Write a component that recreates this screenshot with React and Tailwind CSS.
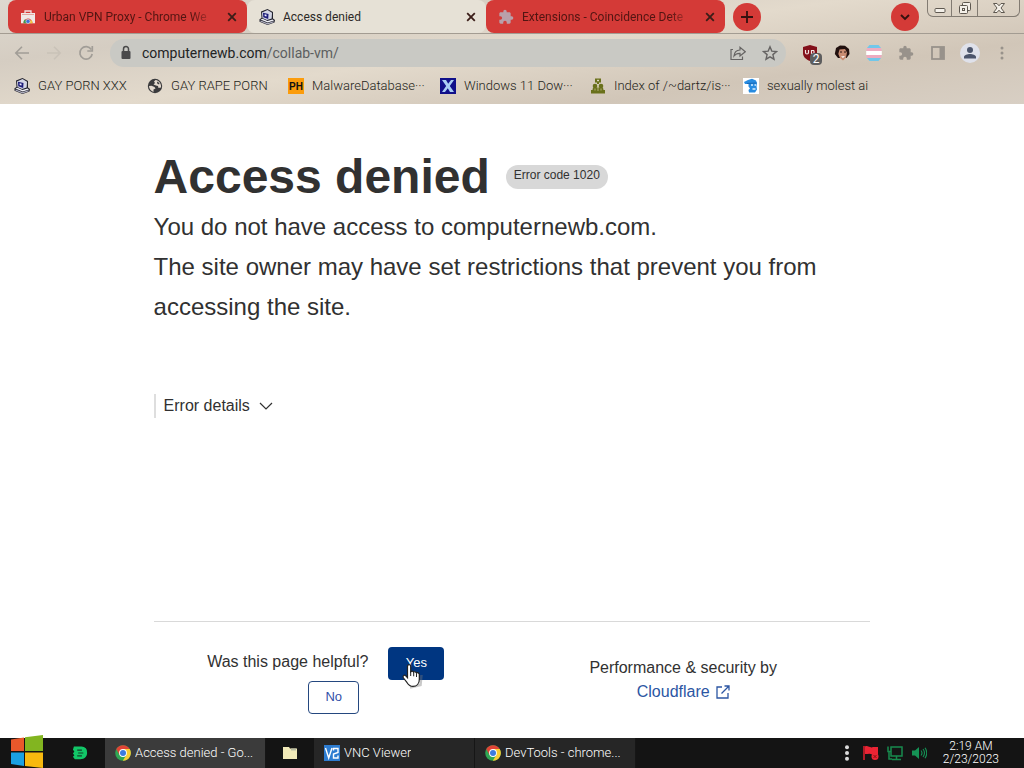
import React from "react";

function CollabIcon() {
  return (
    <svg viewBox="0 0 16 16" className="h-4 w-4 shrink-0" aria-hidden="true">
      <path d="M2 2.5 8.5 0 14 3 14 9.5 16 11 15.5 13.5 8.5 16 .5 12.8 .5 10.300 2.500 9Z" fill="#23232e" />
      <path d="M3 3.500 8.500 1 13 3.700 12.700 9.500 8 11 3.500 9Z" fill="#d4d6e6" />
      <path d="M4 3.800 9.500 5 9.200 10 4.300 8.300Z" fill="#1d1d7a" />
      <path d="M5.600 5.200 7.600 5.700 7.500 7.600 5.600 7.100Z" fill="#eef" />
      <path d="M1.500 10.600 3.500 9.800 8.500 12 13.500 10.500 15 11.400 8.700 13.600Z" fill="#f0f0f6" />
      <path d="M1.500 12 8.600 14.800 14.600 12.700" fill="none" stroke="#b4b4c4" strokeWidth="1.200" />
    </svg>
  );
}

function StoreIcon() {
  return (
    <svg viewBox="0 0 16 16" className="h-4 w-4 shrink-0" aria-hidden="true">
      <path d="M5 4.500V2h6v2.500" fill="none" stroke="#f2dede" strokeWidth="1.300" />
      <path d="M1 4h14v10.300H1z" fill="#efe9e7" />
      <path d="M2 5.500h12" stroke="#e3a49e" />
      <path d="M3.500 14.300a4.500 4.500 0 0 1 9-.5v.5Z" fill="#e0453a" />
      <path d="M3.500 14.300a4.500 4.500 0 0 1 1.500-4l2.500 4Z" fill="#3b9a55" />
      <path d="M12.500 14.300a4.500 4.500 0 0 0-1.300-3.500l-2.700 3.500Z" fill="#f2c43a" />
      <circle cx="8" cy="12.400" r="2.100" fill="#3f6fd8" stroke="#fff" strokeWidth=".5" />
    </svg>
  );
}

function PuzzleIcon({ className }) {
  return (
    <svg viewBox="0 0 24 24" className={className} fill="currentColor" aria-hidden="true">
      <path d="M20.5 11H19V7c0-1.100-.9-2-2-2h-4V3.500a2.500 2.500 0 0 0-5 0V5H4c-1.100 0-2 .9-2 2v3.800h1.500a2.700 2.700 0 0 1 0 5.400H2V20c0 1.100.9 2 2 2h3.800v-1.500a2.700 2.700 0 0 1 5.400 0V22H17c1.100 0 2-.9 2-2v-4h1.500a2.500 2.500 0 0 0 0-5z" />
    </svg>
  );
}

function CrossIcon() {
  return (
    <svg viewBox="0 0 10 10" className="h-[10px] w-[10px]" aria-hidden="true">
      <path d="M1.200 1.200 8.800 8.800M8.800 1.200 1.200 8.800" stroke="currentColor" strokeWidth="1.800" />
    </svg>
  );
}

function GlobeIcon() {
  return (
    <svg viewBox="0 0 16 16" className="h-4 w-4 shrink-0" aria-hidden="true">
      <circle cx="8" cy="8" r="7.200" fill="#3b3b3d" />
      <path d="M2 8 4.500 7.800 7.500 9 8.500 10.500 6.500 11.500 6.500 14 C4 13 2 11 2 8Z" fill="#e2d9ce" />
      <path d="M8.500 2 7 3.500 8 5 6.500 6.500 9 7.500 11 8 11.500 10 14 9.500 C14.600 6.500 12.500 2.500 8.500 2Z" fill="#e2d9ce" />
      <path d="M10 3.500 12.500 5 12 6.500 10.200 5.500Z" fill="#3b3b3d" />
    </svg>
  );
}

function PhIcon() {
  return (
    <svg viewBox="0 0 16 16" className="h-4 w-4 shrink-0" aria-hidden="true">
      <rect width="16" height="16" fill="#fb9c0c" />
      <text x="8" y="12" textAnchor="middle" fontFamily="Liberation Sans, sans-serif" fontWeight="700" fontSize="10" fill="#111">PH</text>
    </svg>
  );
}

function XIcon() {
  return (
    <svg viewBox="0 0 16 16" className="h-4 w-4 shrink-0" aria-hidden="true">
      <rect width="16" height="16" fill="#10108a" />
      <path d="M2 2h4l2.200 3.800L11 2h3l-4.200 6L14 14h-4l-2.200-3.800L5 14H2l4.200-6Z" fill="#a9cdf4" />
    </svg>
  );
}

function IndexIcon() {
  return (
    <svg viewBox="0 0 16 16" className="h-4 w-4 shrink-0" aria-hidden="true" fill="#6a711b">
      <path d="M5 .5h6v4H9v1.500H7V4.500H5Z" />
      <rect x="7" y="1.800" width="2" height="1.400" fill="#ded5c4" />
      <circle cx="5" cy="8" r="2.300" />
      <circle cx="11" cy="8" r="2.300" />
      <path d="M3 9.500h10l.5 2.500H15v3.500H1V12h1.500Z" />
      <path d="M8 7v6M5 10.500v2M11 10.500v2" stroke="#c5c08c" strokeWidth=".8" />
    </svg>
  );
}

function FigureIcon() {
  return (
    <svg viewBox="0 0 16 16" className="h-4 w-4 shrink-0" aria-hidden="true">
      <rect width="16" height="16" fill="#fff" />
      <path d="M1 4 5 2 9 .8 13 2.500 14 5 13.500 8 14 11.500 12 14.500H6L5.500 12 7 10.500 5.500 8.500V6L2 6Z" fill="#278be0" />
      <path d="M8 7h2M11.500 7h1.500M9.500 11h3" stroke="#d8efff" strokeWidth="1.300" />
      <path d="M4 5.500 13.500 5" stroke="#1767b4" strokeWidth="1" />
    </svg>
  );
}

function ChromeIcon() {
  return (
    <svg viewBox="0 0 16 16" className="h-4 w-4 shrink-0" aria-hidden="true">
      <circle cx="8" cy="8" r="7.800" fill="#2fa653" />
      <path d="M1.250 4.100A7.800 7.800 0 0 1 14.750 4.100L8 4.300 4.600 9.900Z" fill="#e04335" />
      <path d="M14.750 4.100A7.800 7.800 0 0 1 7.800 15.800L11.300 9.900 8 4.100Z" fill="#f9cc34" />
      <circle cx="8" cy="8" r="3.900" fill="#fff" />
      <circle cx="8" cy="8" r="3" fill="#3c7be0" />
    </svg>
  );
}

function Tab({ icon, title, active }) {
  return (
    <div
      className={
        "flex min-w-0 max-w-[239px] flex-1 items-center gap-2 rounded-lg pl-3 pr-[10px] " +
        (active ? "bg-[#e6e1d6] text-[#2c2926]" : "bg-[#d43a37] text-[#521512]")
      }
    >
      {icon}
      <span className={"min-w-0 flex-1 whitespace-nowrap text-xs leading-5 " + (active ? "" : "[mask-image:linear-gradient(to_right,black_86%,transparent)]")}>
        {title}
      </span>
      <button aria-label="Close tab" className="ml-1 text-[#3a1d18]">
        <CrossIcon />
      </button>
    </div>
  );
}

function Toolbar() {
  return (
    <div className="flex h-[37px] items-center pl-[14px] pr-[14px] text-[#666463]">
      <button aria-label="Back" className="mr-4 text-[#a19d97]">
        <svg viewBox="0 0 16 16" className="h-4 w-4" fill="none" stroke="currentColor" strokeWidth="1.600"><path d="M15 8H2M8 1.800 1.800 8 8 14.200" /></svg>
      </button>
      <button aria-label="Forward" className="mr-4 text-[#c9c2b8]">
        <svg viewBox="0 0 16 16" className="h-4 w-4" fill="none" stroke="currentColor" strokeWidth="1.600"><path d="M1 8h13M8 1.800 14.200 8 8 14.200" /></svg>
      </button>
      <button aria-label="Reload" className="mr-4 text-[#a19d97]">
        <svg viewBox="0 0 16 16" className="h-4 w-4" fill="none" stroke="currentColor" strokeWidth="1.700"><path d="M13.300 4.500A6.200 6.200 0 1 0 14.200 9" /><path d="M14.300 1v5H9.300" /></svg>
      </button>
      <div className="flex h-7 min-w-0 flex-1 items-center rounded-full bg-[#c9c9c4] pl-2 pr-2">
        <svg viewBox="0 0 16 16" className="mr-2 h-4 w-4 shrink-0" aria-hidden="true">
          <rect x="3.500" y="6" width="9" height="8" rx="1" fill="#49494a" />
          <path d="M5.500 6V4a2.500 2.500 0 0 1 5 0v2" fill="none" stroke="#49494a" strokeWidth="1.500" />
        </svg>
        <div className="relative min-w-0 flex-1 text-sm leading-5">
          <span className="text-[#232425]" aria-hidden="true">computernewb.com</span>
          <span className="text-[#5c5e60]" aria-hidden="true">/collab-vm/</span>
          <input aria-label="Address" defaultValue="computernewb.com/collab-vm/" className="absolute inset-0 w-full bg-transparent text-transparent outline-none" />
        </div>
        <button aria-label="Share" className="mr-4">
          <svg viewBox="0 0 16 16" className="h-4 w-4" fill="none" stroke="currentColor" strokeWidth="1.200"><path d="M3 4.500H1V14.500H12.500V11.500" /><path d="M4 11C4.300 7.300 6.500 5.200 10 5V2.200L15.300 6.700 10 11V8.300C7.300 8.200 5.500 9 4 11Z" /></svg>
        </button>
        <button aria-label="Bookmark this page">
          <svg viewBox="0 0 16 16" className="h-4 w-4" fill="none" stroke="currentColor" strokeWidth="1.400"><path d="m8 1.800 1.800 4.300 4.700.4-3.600 3.100 1.100 4.600L8 11.800l-4 2.400 1.100-4.600L1.500 6.500l4.700-.4Z" /></svg>
        </button>
      </div>
      <div className="ml-4 flex items-center gap-4">
        <button aria-label="Ad blocker" className="relative h-4 w-4">
          <svg viewBox="0 0 16 16" className="h-4 w-4" aria-hidden="true">
            <path d="M8 0 15 2v6c0 4-3 6.500-7 8-4-1.500-7-4-7-8V2Z" fill="#83101a" />
            <path d="M3.500 5v2.500a1.500 1.500 0 0 0 3 0V5M12 5.500H9.500v3h2.500V5.500" fill="none" stroke="#f5e4e4" strokeWidth="1.200" />
          </svg>
          <span className="absolute left-2 top-2 h-3 w-3 rounded-sm bg-[#5d5d5e] text-center text-xs leading-3 text-white">2</span>
        </button>
        <button aria-label="Portrait extension">
          <svg viewBox="0 0 16 16" className="h-4 w-4" aria-hidden="true">
            <path d="M2 3 6 .5 11 .8 15 4l.5 5-3 4H4L.8 9Z" fill="#21100e" />
            <path d="M5.500 4.500 11 4l2 3.500-1 5L9 15.500 6 13 4.300 9Z" fill="#c98c72" />
            <path d="M7 11.500 11 11 9 13Z" fill="#fff" /><path d="M6 7h2M10 7h2" stroke="#2b1612" />
          </svg>
        </button>
        <button aria-label="Flag extension">
          <svg viewBox="0 0 16 16" className="h-4 w-4" aria-hidden="true">
            <path d="M3.500 0h9L15 3H1Z" fill="#71c7ea" /><path d="M1 3h14l.8 3H.2Z" fill="#edabc0" /><path d="M.2 6h15.600v4H.2Z" fill="#fff" /><path d="M.2 10h15.600l-.8 3H1Z" fill="#edabc0" /><path d="M1 13h14l-2.500 3h-9Z" fill="#71c7ea" />
          </svg>
        </button>
        <button aria-label="Extensions" className="text-[#98928b]"><PuzzleIcon className="h-4 w-4" /></button>
        <button aria-label="Side panel" className="text-[#98928b]">
          <svg viewBox="0 0 16 16" className="h-4 w-4" aria-hidden="true"><rect x="2" y="2" width="12" height="12" fill="none" stroke="currentColor" strokeWidth="1.800" /><path d="M9.500 2H14v12H9.500Z" fill="currentColor" /></svg>
        </button>
        <button aria-label="Profile" className="-mx-[2px] flex h-5 w-5 items-center justify-center rounded-full bg-[#dfe1ea]">
          <svg viewBox="0 0 16 16" className="h-4 w-4" fill="#4c556c" aria-hidden="true"><circle cx="8" cy="5" r="3" /><path d="M2 13.500V12c0-2 3.500-3 6-3s6 1 6 3v1.500Z" /></svg>
        </button>
        <button aria-label="Menu" className="text-[#98928b]">
          <svg viewBox="0 0 16 16" className="h-4 w-4" fill="currentColor" aria-hidden="true"><circle cx="8" cy="3" r="1.500" /><circle cx="8" cy="8" r="1.500" /><circle cx="8" cy="13" r="1.500" /></svg>
        </button>
      </div>
    </div>
  );
}

function Bookmark({ icon, width, children }) {
  return (
    <a href="#bookmark" className={"flex shrink-0 items-center gap-2 whitespace-nowrap " + width}>
      {icon}
      {children}
    </a>
  );
}

function BrowserHeader() {
  return (
    <header className="shrink-0 bg-[#d9d0c3] bg-[linear-gradient(172deg,#ded9d0_0%,#d5cdc2_25%,#e3dacc_48%,#d1c6b8_75%,#d8cfc4_100%)] font-['Roboto','Noto_Sans',sans-serif]">
      <div className="flex h-[34px] items-stretch border-b border-[#a39c92] pl-2">
        <div className="flex min-w-0 flex-1">
          <Tab icon={<StoreIcon />} title="Urban VPN Proxy - Chrome We" />
          <Tab icon={<CollabIcon />} title="Access denied" active />
          <Tab icon={<PuzzleIcon className="h-4 w-4 shrink-0 text-[#b9a0aa]" />} title="Extensions - Coincidence Dete" />
          <button aria-label="New tab" className="ml-2 flex h-7 w-7 shrink-0 items-center justify-center self-center rounded-full bg-[#d43a37] text-[#35110f]">
            <svg viewBox="0 0 14 14" className="h-[14px] w-[14px]" stroke="currentColor" strokeWidth="1.800"><path d="M7 1v12M1 7h12" /></svg>
          </button>
        </div>
        <button aria-label="Search tabs" className="mr-2 flex h-7 w-7 shrink-0 items-center justify-center self-center rounded-full bg-[#d43a37] text-[#35110f]">
          <svg viewBox="0 0 12 12" className="h-3 w-3" fill="none" stroke="currentColor" strokeWidth="1.900"><path d="m2 4 4 4 4-4" /></svg>
        </button>
        <div className="mr-1 flex h-[17px] overflow-hidden rounded-b-md border border-t-0 border-[#827b72] text-[#5e5850]">
          <button aria-label="Minimize" className="flex w-6 items-center justify-center border-r border-[#827b72]">
            <svg viewBox="0 0 12 12" className="h-3 w-3"><rect x="1" y="6.500" width="10" height="4" rx="1" fill="#f4f0e9" stroke="currentColor" /></svg>
          </button>
          <button aria-label="Restore" className="flex w-[26px] items-center justify-center border-r border-[#827b72]">
            <svg viewBox="0 0 14 14" className="h-[14px] w-[14px]" fill="#f4f0e9" stroke="currentColor"><rect x="4.500" y="1.500" width="8" height="8" rx="1" /><rect x="1.500" y="4.500" width="8" height="8" rx="1" /><rect x="4.500" y="7.500" width="2" height="2" /></svg>
          </button>
          <button aria-label="Close window" className="flex w-[41px] items-center justify-center">
            <svg viewBox="0 0 14 12" className="h-3 w-[14px]" fill="#f4f0e9" stroke="currentColor"><path d="M1.500 1.500h3.500l2 2.300 2-2.300h3.500L9 6l3.500 4.500H9L7 8.200 5 10.500H1.500L5 6Z" /></svg>
          </button>
        </div>
      </div>
      <Toolbar />
      <nav aria-label="Bookmarks" className="flex h-[33px] items-center overflow-hidden pb-1 pl-[14px] text-[13px] font-light leading-5 text-[#241e19]">
        <Bookmark width="w-[133px]" icon={<CollabIcon />}>GAY PORN XXX</Bookmark>
        <Bookmark width="w-[141px]" icon={<GlobeIcon />}>GAY RAPE PORN</Bookmark>
        <Bookmark width="w-[152px]" icon={<PhIcon />}>MalwareDatabase···</Bookmark>
        <Bookmark width="w-[150px]" icon={<XIcon />}>Windows 11 Dow···</Bookmark>
        <Bookmark width="w-[153px]" icon={<IndexIcon />}>Index of /~dartz/is···</Bookmark>
        <Bookmark width="w-auto" icon={<FigureIcon />}>sexually molest ai</Bookmark>
      </nav>
    </header>
  );
}

function ErrorPage() {
  return (
    <main className="flex flex-1 flex-col bg-white font-['Liberation_Sans',Arial,sans-serif] text-[#313131]">
      <div className="mx-auto flex w-[70%] flex-1 flex-col pt-[49px]">
        <div className="flex items-center gap-4">
          <h1 className="text-5xl font-bold leading-[48px]">Access denied</h1>
          <span className="h-6 rounded-full bg-[#d8d8d8] px-2 text-xs leading-5">Error code 1020</span>
        </div>
        <p className="mt-[6px] text-2xl leading-10">
          You do not have access to computernewb.com.
          <br />
          The site owner may have set restrictions that prevent you from accessing the site.
        </p>
        <button className="mt-[67px] flex h-6 items-center gap-2 self-start border-l-2 border-[#dedede] pl-2 text-base leading-6">
          Error details
          <svg viewBox="0 0 16 16" className="h-4 w-4" fill="none" stroke="currentColor" strokeWidth="1.200"><path d="m2 5 6 6 6-6" /></svg>
        </button>
        <footer className="mt-auto grid grid-cols-2 border-t border-[#d9d9d9] pb-6 pt-[25px] text-base leading-6">
          <div className="flex flex-col items-center pl-[2px]">
            <div className="flex items-center gap-5 pr-4">
              <span className="pb-1">Was this page helpful?</span>
              <button className="relative h-[33px] w-14 rounded bg-[#003681] pb-[2px] text-[13px] leading-5 text-white">
                Yes
                <svg viewBox="0 0 22 26" className="absolute left-[13px] top-4 h-[26px] w-[22px]" aria-hidden="true">
                  <path d="M9 24.500 19.500 22 20.500 12" fill="none" stroke="#777" strokeOpacity=".4" strokeWidth="2.500" />
                  <path d="M6.500 3.500c0-2.500 3.200-2.500 3.200 0v5.300c.8-1 2.500-.8 2.900.4.800-.8 2.500-.5 2.800.7 1.200-.7 2.900 0 2.900 1.700v4.800c0 4-2.500 7-6.300 7-3 0-4.500-1.500-5.900-3.700L2.500 15c-1.400-2 .8-3.700 2.300-2.200l1.700 1.900Z" fill="#fff" stroke="#222" strokeWidth="1.200" />
                  <path d="M9.700 8v5M12.700 9.500v3.800M15.500 10.200V14" stroke="#222" />
                </svg>
              </button>
            </div>
            <button className="mt-px h-[33px] w-[51px] rounded border border-[#24477f] pb-[2px] text-[13px] leading-5 text-[#3350a8]">No</button>
          </div>
          <div className="pr-4 pt-[9px] text-center">
            Performance &amp; security by
            <br />
            <a href="#cloudflare" className="inline-flex items-center gap-[6px] text-[#2c56a3]">
              Cloudflare
              <svg viewBox="0 0 14 14" className="h-[14px] w-[14px]" fill="none" stroke="currentColor" strokeWidth="1.300"><path d="M6 2H1v11h11V8M5.500 8.500 13 1M8.500 1H13v4.500" /></svg>
            </a>
          </div>
        </footer>
      </div>
    </main>
  );
}

function Task({ icon, active, children }) {
  return (
    <button className={"flex h-full w-[161px] shrink-0 items-center gap-1 border-r border-[#161616] pl-[10px] text-left " + (active ? "bg-[#3b3b3b]" : "bg-[#262626]")}>
      {icon}
      <span className="truncate">{children}</span>
    </button>
  );
}

function Taskbar() {
  return (
    <div className="flex h-[30px] shrink-0 items-center bg-[#141414] font-['Roboto','Noto_Sans',sans-serif] text-[13px] font-light leading-5 text-white">
      <button aria-label="Start" className="relative ml-[10px] h-[30px] w-[34px]">
        <svg viewBox="0 0 34 34" className="absolute bottom-0 left-0 h-[34px] w-[34px]" aria-hidden="true">
          <path d="M1 5.500 14 3.500V17H1Z" fill="#e9582b" /><path d="M15 3.200 33 1V17H15Z" fill="#82b520" />
          <path d="M1 18.500H14V32L1 30Z" fill="#1ba0e2" /><path d="M15 18.500H33V34L15 32Z" fill="#f8b90f" />
        </svg>
      </button>
      <button aria-label="Notes" className="ml-7 mr-4">
        <svg viewBox="0 0 18 16" className="h-4 w-[17px]" aria-hidden="true"><path d="M2 1h8a6 6 0 0 1 6 7c0 4-3 6.500-7 6.500H3L1 12l1.500-1.500L1 8.500 2.500 6.500 1 4.500Z" fill="#12c768" /><path d="M5.500 5h5M6.500 8H12M5.500 11h5" stroke="#13432b" strokeWidth="1.200" /></svg>
      </button>
      <Task active icon={<ChromeIcon />}>Access denied - Go...</Task>
      <button aria-label="Files" className="mx-4">
        <svg viewBox="0 0 16 16" className="h-4 w-4" aria-hidden="true"><path d="M1 2h6l1 1.500h7V14H1Z" fill="#f1eab8" /><path d="M9 3.500h5v2H9Z" fill="#b9bda2" /></svg>
      </button>
      <Task icon={<svg viewBox="0 0 16 16" className="h-4 w-4 shrink-0" aria-hidden="true"><rect width="16" height="16" fill="#2d7cd0" /><path d="M1.500 3 4.700 13 8 3M9.500 5.500V3.500H14V7.500L9.500 9V13H14V10.500" fill="none" stroke="#fff" strokeWidth="1.400" /></svg>}>VNC Viewer</Task>
      <Task icon={<ChromeIcon />}>DevTools - chrome...</Task>
      <div className="ml-auto flex items-center gap-2 pr-[25px]">
        <svg viewBox="0 0 16 16" className="h-4 w-4" fill="#dcdcdc" aria-hidden="true"><circle cx="8" cy="2.200" r="2" /><circle cx="8" cy="8" r="2" /><circle cx="8" cy="13.800" r="2" /></svg>
        <svg viewBox="0 0 16 16" className="h-4 w-4" aria-hidden="true"><path d="M1 1v14" stroke="#df1f2d" strokeWidth="1.500" /><path d="M2 1.500C5 0 7 3.500 10 2h5v7.500H9C7 8 5 9 2 9Z" fill="#ec2434" /><circle cx="12" cy="11.500" r="3.500" fill="#ec2434" /><path d="m10.500 10 3 3M13.500 10l-3 3" stroke="#811" /></svg>
        <svg viewBox="0 0 16 16" className="h-4 w-4" fill="none" stroke="#178a4d" strokeWidth="1.500" aria-hidden="true"><path d="M4 2h11v9H4ZM9.500 11v3M5 14.500h9M1 1.500v5h3M2 6v8h3" /></svg>
        <svg viewBox="0 0 16 16" className="h-4 w-4" aria-hidden="true"><path d="M1 5.500h3L8 2v12L4 10.500H1Z" fill="#159255" /><path d="M10 5.500q2 2.500 0 5M12 4q3 4 0 8M14 2.800q3.500 5 0 10.400" fill="none" stroke="#159255" strokeWidth="1.100" /></svg>
        <time className="ml-2 text-center text-xs leading-[13px]">2:19 AM<br />2/23/2023</time>
      </div>
    </div>
  );
}

export default function App() {
  return (
    <div className="flex min-h-screen flex-col">
      <BrowserHeader />
      <ErrorPage />
      <Taskbar />
    </div>
  );
}
